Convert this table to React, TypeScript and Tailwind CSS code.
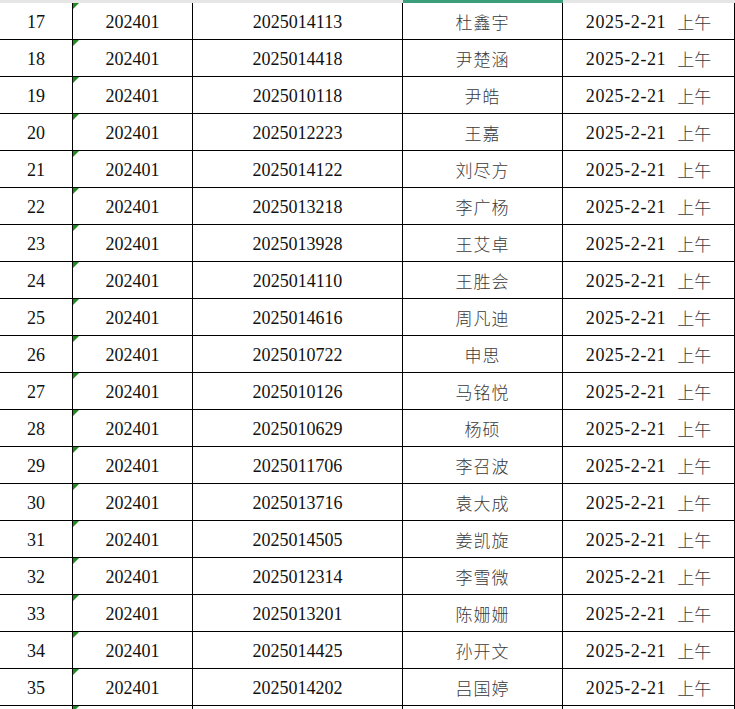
const rows = [
  { n: 17, id: "2025014113", name: "杜鑫宇" },
  { n: 18, id: "2025014418", name: "尹楚涵" },
  { n: 19, id: "2025010118", name: "尹皓" },
  { n: 20, id: "2025012223", name: "王嘉" },
  { n: 21, id: "2025014122", name: "刘尽方" },
  { n: 22, id: "2025013218", name: "李广杨" },
  { n: 23, id: "2025013928", name: "王艾卓" },
  { n: 24, id: "2025014110", name: "王胜会" },
  { n: 25, id: "2025014616", name: "周凡迪" },
  { n: 26, id: "2025010722", name: "申思" },
  { n: 27, id: "2025010126", name: "马铭悦" },
  { n: 28, id: "2025010629", name: "杨硕" },
  { n: 29, id: "2025011706", name: "李召波" },
  { n: 30, id: "2025013716", name: "袁大成" },
  { n: 31, id: "2025014505", name: "姜凯旋" },
  { n: 32, id: "2025012314", name: "李雪微" },
  { n: 33, id: "2025013201", name: "陈姗姗" },
  { n: 34, id: "2025014425", name: "孙开文" },
  { n: 35, id: "2025014202", name: "吕国婷" },
  { n: 36, id: "", name: "" },
];

const serif = "font-['Liberation_Serif','Noto_Sans_CJK_SC',serif]";
const cjk = "font-['Noto_Sans_CJK_SC',sans-serif] font-light leading-none -mt-[2px]";

const Cell = ({ w, children, flag }: { w: string; children?: React.ReactNode; flag?: boolean }) => (
  <div className={`${w} relative h-[37px] pt-[3px] border-r border-b border-black flex items-center justify-center`}>
    {flag && (
      <div className="absolute left-0 top-0 w-0 h-0 border-t-[6px] border-t-[#1f8a1f] border-r-[6px] border-r-transparent" />
    )}
    {children}
  </div>
);

export default function App() {
  return (
    <div className="w-[735px] h-[709px] overflow-hidden bg-white text-[#111]">
      {/* header strip */}
      <div className="flex h-[3px]">
        <div className="w-[403px] bg-[#e6e6e6]" />
        <div className="w-[160px] bg-[#3b9e7a]" />
        <div className="flex-1 bg-[#e6e6e6]" />
      </div>

      {rows.map((r) => (
        <div key={r.n} className={`flex text-[18px] ${serif}`}>
          <Cell w="w-[73px]">{r.id && r.n}</Cell>
          <Cell w="w-[120px]" flag>{r.id && "202401"}</Cell>
          <Cell w="w-[210px]">{r.id}</Cell>
          <Cell w="w-[160px]">
            <span className={`${cjk} text-[17px] text-[#3a3a3a] tracking-[1px]`}>{r.name}</span>
          </Cell>
          <Cell w="w-[172px]">
            {r.id && (
              <span className="flex items-center">
                <span className="tracking-[0.6px]">2025-2-21</span>
                <span className={`${cjk} ml-[11px] text-[17px] text-[#3a3a3a]`}>上午</span>
              </span>
            )}
          </Cell>
        </div>
      ))}
    </div>
  );
}
